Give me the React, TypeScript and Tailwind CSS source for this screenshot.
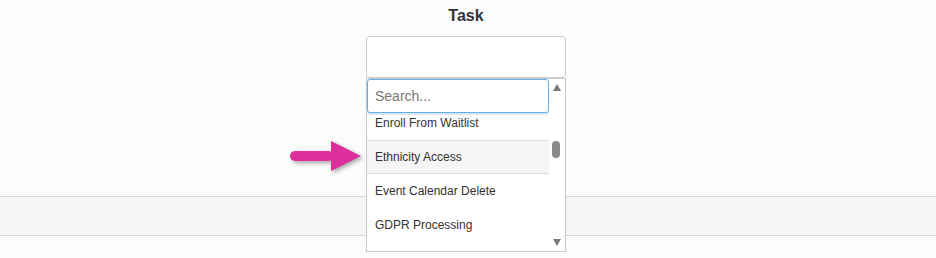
import React from 'react';

const items = [
  'Enroll From Waitlist',
  'Ethnicity Access',
  'Event Calendar Delete',
  'GDPR Processing',
];

const HOVERED = 1;

const PointerArrow: React.FC = () => (
  <svg
    width="78"
    height="40"
    viewBox="0 0 78 40"
    className="absolute right-full top-[103px] z-20 drop-shadow-[2px_2px_2px_rgba(0,0,0,0.35)]"
  >
    <rect x="2" y="12" width="43" height="10" rx="5" fill="#dd2f9b" />
    <polygon points="43,2 73,17 43,32" fill="#dd2f9b" />
  </svg>
);

const TaskSelect: React.FC = () => {
  return (
    <div className="relative mt-[10px] w-[200px]">
      <div className="h-[42px] rounded-[4px] border border-[#ccc] bg-white" />

      <PointerArrow />

      {/* open dropdown */}
      <div className="absolute left-0 top-full z-10 flex h-[174px] w-[200px] border border-[#c8c8c8] bg-white">
        <div className="flex w-[182px] flex-col">
          <input
            placeholder="Search..."
            className="h-[34px] w-full rounded-[3px] border border-[#66afe9] bg-white pl-[7px] text-[14px] text-[#333] shadow-[0_2px_0_#d6e8f8] outline-none placeholder:text-[#777]"
          />
          <div className="flex-1 overflow-hidden">
            <ul className="-mt-[7px]">
              {items.map((item, i) => (
                <li
                  key={item}
                  className={
                    i === HOVERED
                      ? 'flex h-[34px] items-center border-y border-[#dcdcdc] bg-[#f5f5f5] pl-[8px] text-[12px]'
                      : 'flex h-[34px] items-center border-y border-transparent pl-[8px] text-[12px]'
                  }
                >
                  {item}
                </li>
              ))}
            </ul>
          </div>
        </div>

        {/* scrollbar */}
        <div className="relative flex w-[16px] flex-col items-center justify-between py-[5px]">
          <div className="h-0 w-0 border-x-[4.5px] border-b-[7px] border-x-transparent border-b-[#7a7a7a]" />
          <div className="absolute left-[3px] top-[62px] h-[17px] w-[8px] rounded-full bg-[#8a8a8a]" />
          <div className="h-0 w-0 border-x-[4.5px] border-t-[7px] border-x-transparent border-t-[#7a7a7a]" />
        </div>
      </div>
    </div>
  );
};

export default function App() {
  return (
    <div className="relative min-h-[258px] overflow-hidden bg-[#fcfcfc] pt-[6px] font-['Liberation_Sans',Arial,sans-serif] text-[#333]">
      <div className="flex flex-col items-center pr-[4px]">
        <h2 className="text-[16px] font-bold leading-5">Task</h2>
        <TaskSelect />
      </div>
      <div className="mt-[118px] h-[40px] border-y border-[#d6d6d6] bg-[#f5f5f5]" />
    </div>
  );
}
